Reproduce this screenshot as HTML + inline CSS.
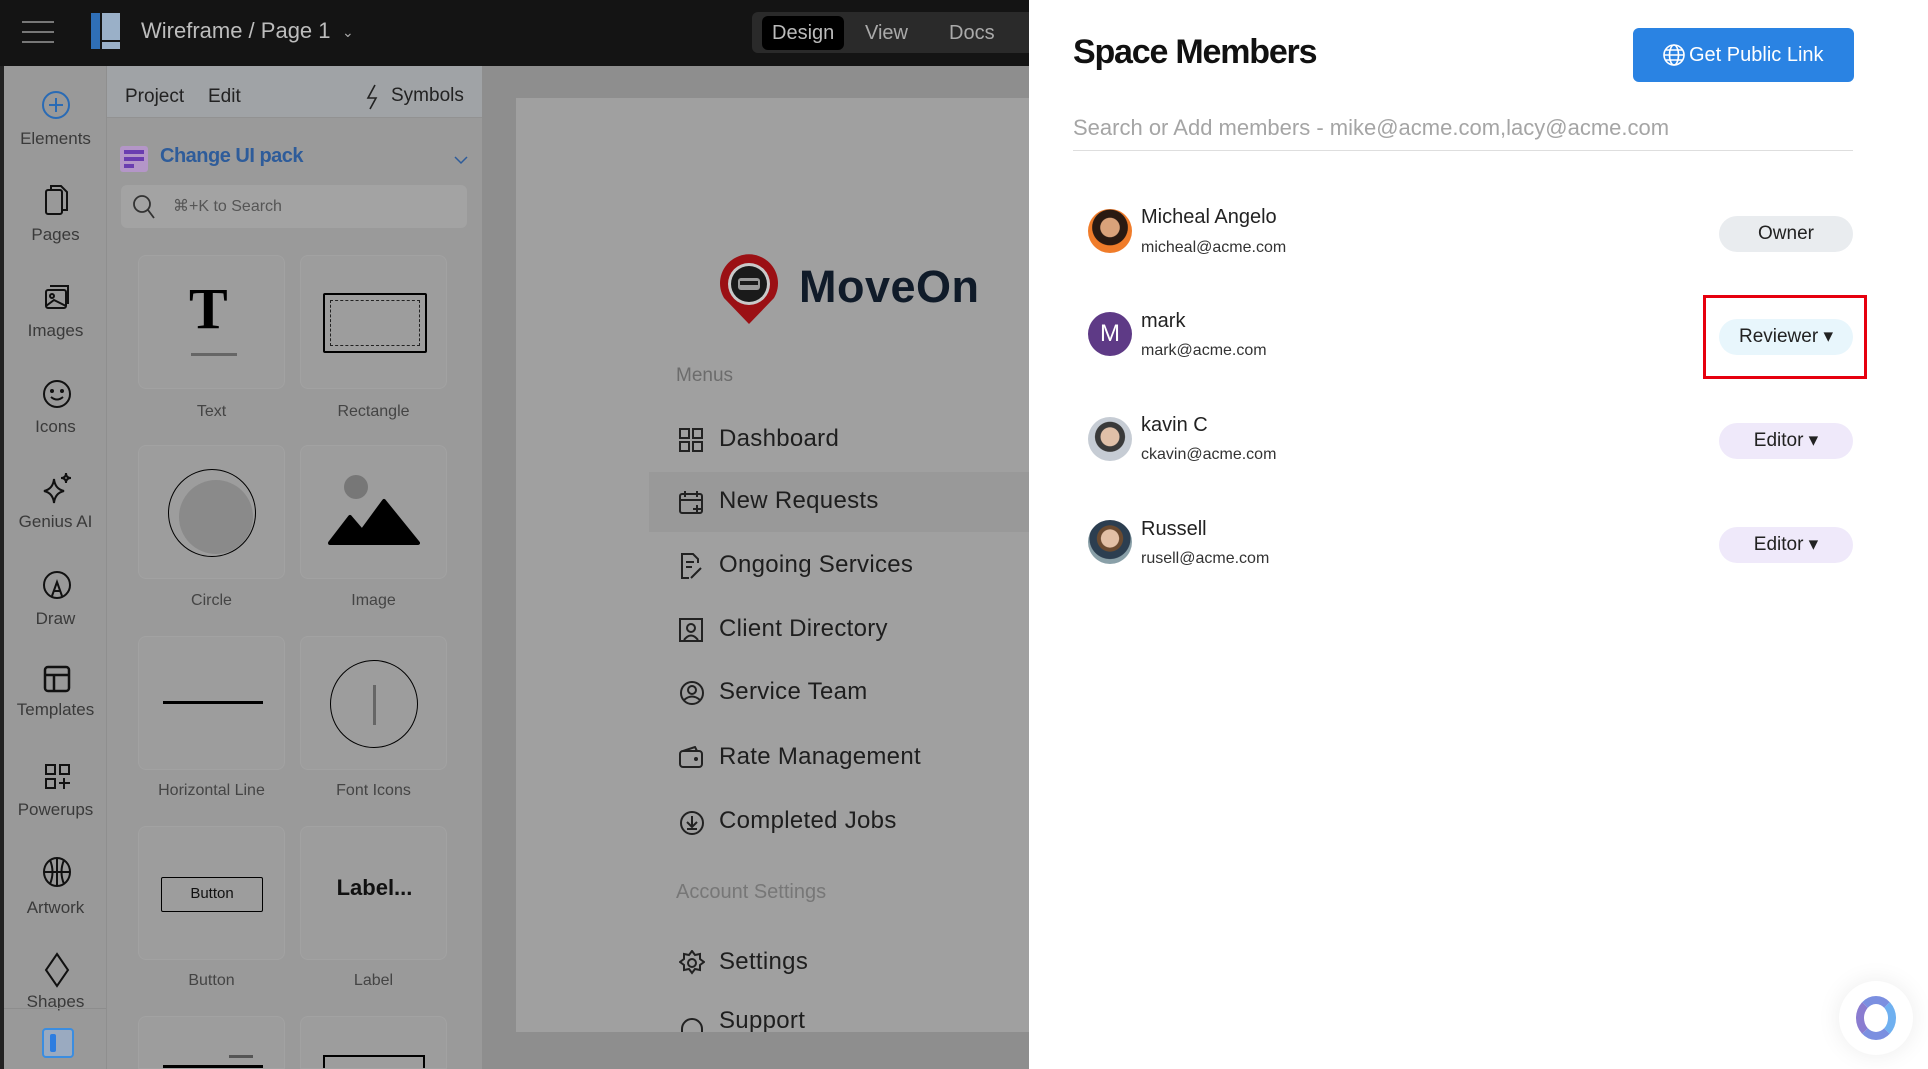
<!DOCTYPE html>
<html style="overflow:hidden;height:1069px"><head><meta charset="utf-8"><style>
*{margin:0;padding:0;box-sizing:border-box}
html,body{width:1928px;height:1069px;overflow:hidden}
body{position:relative;background:#fff;font-family:"Liberation Sans",sans-serif}
.a{position:absolute}
.top{left:0;top:0;width:1029px;height:66px;background:#141414}
.side{left:0;top:66px;width:107px;height:1003px;background:#999;border-left:4px solid #222;border-right:1px solid #8f8f8f;overflow:hidden}
.sl{position:absolute;width:103px;left:0;text-align:center;font-size:17px;color:#3a3a3a}
.panel{left:107px;top:66px;width:375px;height:1003px;background:#9a9a9a;overflow:hidden}
.tile{position:absolute;width:147px;height:134px;background:#9d9d9d;border:1px solid #a2a2a2;border-radius:8px;overflow:hidden}
.tl{position:absolute;width:147px;text-align:center;font-size:16px;color:#444}
.canvas{left:482px;top:66px;width:547px;height:1003px;background:#8e8e8e}
.art{left:516px;top:98px;width:513px;height:934px;background:#a0a0a0;overflow:hidden}
.mi{position:absolute;left:203px;font-size:24px;color:#1e1e1e;letter-spacing:.3px}
.ic{position:absolute;left:163px}
.name{position:absolute;left:1141px;font-size:20px;color:#222}
.mail{position:absolute;left:1141px;font-size:16px;color:#333}
.badge{position:absolute;left:1719px;width:134px;height:36px;border-radius:18px;font-size:19px;color:#222;text-align:center;line-height:36px}
.av{position:absolute;left:1088px;width:44px;height:44px;border-radius:50%}
</style></head><body>
<div class="a top"></div>
<svg class="a" style="left:22px;top:20px" width="34" height="24"><g stroke="#777" stroke-width="2"><line x1="0" y1="2" x2="32" y2="2"/><line x1="0" y1="12" x2="32" y2="12"/><line x1="0" y1="22" x2="32" y2="22"/></g></svg>
<svg class="a" style="left:91px;top:13px" width="32" height="36"><rect x="0" y="0" width="9" height="36" fill="#2f6fb7"/><rect x="11" y="0" width="18" height="27" fill="#9ab0c8"/><rect x="11" y="29" width="18" height="7" fill="#9ab0c8"/></svg>
<div class="a" style="left:141px;top:18px;font-size:22px;color:#bdbdbd">Wireframe / Page 1</div>
<div class="a" style="left:342px;top:24px;font-size:14px;color:#aaa">⌄</div>
<div class="a" style="left:752px;top:12px;width:277px;height:41px;background:#2a2a2a;border-radius:6px 0 0 6px"></div>
<div class="a" style="left:762px;top:16px;width:82px;height:34px;background:#000;border-radius:6px"></div>
<div class="a" style="left:772px;top:22px;font-size:20px;color:#bbb">Design</div>
<div class="a" style="left:865px;top:22px;font-size:20px;color:#aaa">View</div>
<div class="a" style="left:949px;top:22px;font-size:20px;color:#aaa">Docs</div>

<div class="a side">
<svg class="a" style="left:37px;top:24px" width="30" height="30"><circle cx="15" cy="15" r="13" fill="none" stroke="#2a6bb5" stroke-width="2"/><path d="M15 8v14M8 15h14" stroke="#2a6bb5" stroke-width="2"/></svg>
<div class="sl" style="top:63px">Elements</div>
<svg class="a" style="left:40px;top:118px" width="26" height="32" fill="none" stroke="#111" stroke-width="2"><rect x="2" y="6" width="16" height="24" rx="2"/><path d="M7 6V2h10l6 6v18h-5"/></svg>
<div class="sl" style="top:159px">Pages</div>
<svg class="a" style="left:40px;top:218px" width="28" height="28" fill="none" stroke="#111" stroke-width="2"><rect x="2" y="6" width="20" height="18" rx="2"/><path d="M6 2h18v18"/><circle cx="8" cy="12" r="2"/><path d="M2 22l8-6 12 6"/></svg>
<div class="sl" style="top:255px">Images</div>
<svg class="a" style="left:38px;top:313px" width="30" height="30" fill="none" stroke="#111" stroke-width="2"><circle cx="15" cy="15" r="13"/><circle cx="10" cy="12" r="1" fill="#111"/><circle cx="20" cy="12" r="1" fill="#111"/><path d="M9 18q6 5 12 0"/></svg>
<div class="sl" style="top:351px">Icons</div>
<svg class="a" style="left:36px;top:405px" width="34" height="34" fill="none" stroke="#111" stroke-width="2"><path d="M14 8q1 10 10 12q-9 2-10 12q-1-10-10-12q9-2 10-12z"/><path d="M26 2q0 5 5 5q-5 0-5 5q0-5-5-5q5 0 5-5z"/></svg>
<div class="sl" style="top:446px">Genius AI</div>
<svg class="a" style="left:38px;top:504px" width="30" height="30" fill="none" stroke="#111" stroke-width="2"><circle cx="15" cy="15" r="13"/><path d="M10 26l5-14 5 14M11 21h8"/></svg>
<div class="sl" style="top:543px">Draw</div>
<svg class="a" style="left:39px;top:599px" width="28" height="28" fill="none" stroke="#111" stroke-width="2.5"><rect x="2" y="2" width="24" height="24" rx="3"/><path d="M2 10h24M11 10v16"/></svg>
<div class="sl" style="top:634px">Templates</div>
<svg class="a" style="left:40px;top:697px" width="28" height="28" fill="none" stroke="#111" stroke-width="2"><rect x="2" y="2" width="9" height="9"/><rect x="16" y="2" width="9" height="9"/><rect x="2" y="16" width="9" height="9"/><path d="M20 15v11M15 20h11"/></svg>
<div class="sl" style="top:734px">Powerups</div>
<svg class="a" style="left:38px;top:790px" width="30" height="32" fill="none" stroke="#111" stroke-width="2"><ellipse cx="15" cy="16" rx="13" ry="14"/><path d="M15 2v28M2 16h26M8 4q5 12 0 24M22 4q-5 12 0 24"/></svg>
<div class="sl" style="top:832px">Artwork</div>
<svg class="a" style="left:40px;top:886px" width="26" height="36" fill="none" stroke="#111" stroke-width="2"><path d="M13 2L24 18 13 34 2 18z"/></svg>
<div class="sl" style="top:926px">Shapes</div>
<div class="a" style="left:0;top:942px;width:103px;height:1px;background:#8d8d8d"></div>
<div class="a" style="left:38px;top:962px;width:32px;height:30px;border:2px solid #3b8de0;border-radius:4px;background:#9aaac0"><div style="margin:4px 0 0 6px;width:6px;height:18px;background:#2d7de0;border-radius:2px"></div></div>
</div>

<div class="a panel">
<div class="a" style="left:0;top:0;width:375px;height:52px;background:#a0a3a6;border-bottom:1px solid #929292"></div>
<div class="a" style="left:18px;top:20px;font-size:19px;color:#222">Project</div>
<div class="a" style="left:101px;top:20px;font-size:19px;color:#222">Edit</div>
<svg class="a" style="left:258px;top:18px" width="16" height="26" fill="none" stroke="#222" stroke-width="1.6"><path d="M10 1L3 14h8L5 25"/></svg>
<div class="a" style="left:284px;top:19px;font-size:19px;color:#222">Symbols</div>
<svg class="a" style="left:13px;top:80px" width="28" height="26"><rect x="0" y="0" width="28" height="26" rx="3" fill="#b496c8"/><rect x="4" y="4" width="20" height="4" fill="#6a3db0"/><rect x="4" y="11" width="20" height="4" fill="#6a3db0"/><rect x="4" y="18" width="10" height="4" fill="#6a3db0"/></svg>
<div class="a" style="left:53px;top:79px;font-size:20px;font-weight:bold;color:#2e5c9a;letter-spacing:-.5px">Change UI pack</div>
<svg class="a" style="left:347px;top:90px" width="14" height="10" fill="none" stroke="#2e5c9a" stroke-width="1.5"><path d="M1 1l6 6 6-6"/></svg>
<div class="a" style="left:14px;top:119px;width:346px;height:43px;background:#a3a3a3;border-radius:6px"></div>
<svg class="a" style="left:25px;top:128px" width="24" height="26" fill="none" stroke="#333" stroke-width="1.8"><circle cx="10" cy="10" r="8"/><path d="M16 16l6 8"/></svg>
<div class="a" style="left:66px;top:130px;font-size:16px;color:#555">⌘+K to Search</div>

<div class="tile" style="left:31px;top:189px"><div style="position:absolute;left:50px;top:28px;font-family:'Liberation Serif',serif;font-weight:bold;font-size:58px;line-height:50px;color:#000">T</div><div style="position:absolute;left:52px;top:97px;width:46px;height:3px;background:#666"></div></div>
<div class="tile" style="left:193px;top:189px"><div style="position:absolute;left:22px;top:37px;width:104px;height:60px;border:2px solid #000;border-radius:2px"><div style="margin:5px;height:46px;border:1.5px dashed #222"></div></div></div>
<div class="tl" style="left:31px;top:337px">Text</div>
<div class="tl" style="left:193px;top:337px">Rectangle</div>
<div class="tile" style="left:31px;top:379px"><div style="position:absolute;left:29px;top:23px;width:88px;height:88px;border:1.5px solid #000;border-radius:50%;overflow:hidden"><div style="margin:10px 0 0 10px;width:74px;height:74px;border-radius:50%;background:#8a8a8a"></div></div></div>
<div class="tile" style="left:193px;top:379px"><svg style="position:absolute;left:27px;top:27px" width="92" height="80"><circle cx="28" cy="14" r="12" fill="#777"/><path d="M2 70L22 44 34 58 56 28 90 70z" fill="#000" stroke="#000" stroke-width="4" stroke-linejoin="round"/></svg></div>
<div class="tl" style="left:31px;top:526px">Circle</div>
<div class="tl" style="left:193px;top:526px">Image</div>
<div class="tile" style="left:31px;top:570px"><div style="position:absolute;left:24px;top:64px;width:100px;height:3px;background:#000"></div></div>
<div class="tile" style="left:193px;top:570px"><div style="position:absolute;left:29px;top:23px;width:88px;height:88px;border:1.5px solid #000;border-radius:50%"><div style="position:absolute;left:42px;top:24px;width:3px;height:40px;background:#666"></div></div></div>
<div class="tl" style="left:31px;top:716px">Horizontal Line</div>
<div class="tl" style="left:193px;top:716px">Font Icons</div>
<div class="tile" style="left:31px;top:760px"><div style="position:absolute;left:22px;top:50px;width:102px;height:35px;border:1.5px solid #000;border-radius:2px;font-size:15px;text-align:center;line-height:32px;color:#111">Button</div></div>
<div class="tile" style="left:193px;top:760px"><div style="position:absolute;width:147px;top:48px;text-align:center;font-size:22px;font-weight:bold;color:#111">Label...</div></div>
<div class="tl" style="left:31px;top:906px">Button</div>
<div class="tl" style="left:193px;top:906px">Label</div>
<div class="tile" style="left:31px;top:950px;height:53px;border-radius:8px 8px 0 0"><div style="position:absolute;left:24px;top:48px;width:100px;height:3px;background:#000"></div><div style="position:absolute;left:90px;top:38px;width:24px;height:3px;background:#555"></div></div>
<div class="tile" style="left:193px;top:950px;height:53px;border-radius:8px 8px 0 0"><div style="position:absolute;left:22px;top:38px;width:102px;height:15px;border:2px solid #000;border-bottom:none"></div></div>
</div>
<div class="a" style="left:491px;top:560px;width:4px;height:4px;border-radius:50%;background:#111;box-shadow:0 7px 0 #111,0 14px 0 #111"></div>

<div class="a canvas"></div>
<div class="a art">
<svg class="a" style="left:202px;top:156px" width="62" height="72"><path d="M31 70L6 44A29 29 0 1 1 56 44z" fill="#9b1014"/><circle cx="31" cy="30" r="21" fill="#c9c9c9"/><circle cx="31" cy="30" r="18" fill="#1a1a1a"/><rect x="20" y="24" width="22" height="12" rx="3" fill="#9a9a9a"/><rect x="22" y="27" width="18" height="4" fill="#1a1a1a"/></svg>
<div class="a" style="left:283px;top:163px;font-size:45px;font-weight:bold;color:#101b29;letter-spacing:.5px">MoveOn</div>
<div class="a" style="left:160px;top:267px;font-size:19px;color:#6c6c6c">Menus</div>
<div class="a" style="left:133px;top:374px;width:380px;height:60px;background:#999"></div>
<svg class="ic" style="top:330px" width="24" height="24" fill="none" stroke="#222" stroke-width="2"><rect x="1" y="1" width="9" height="9"/><rect x="14" y="1" width="9" height="9"/><rect x="1" y="14" width="9" height="9"/><rect x="14" y="14" width="9" height="9"/></svg>
<div class="mi" style="top:327px">Dashboard</div>
<svg class="ic" style="top:392px" width="24" height="24" fill="none" stroke="#222" stroke-width="2"><rect x="1" y="4" width="22" height="19" rx="2"/><path d="M1 10h22M6 1v6M18 1v6M18 15v8M14 19h8"/></svg>
<div class="mi" style="top:389px">New Requests</div>
<svg class="ic" style="top:455px" width="24" height="26" fill="none" stroke="#222" stroke-width="2"><path d="M19 10V6l-5-5H3v24h7"/><path d="M7 9h8M7 14h6M12 25l10-10"/></svg>
<div class="mi" style="top:453px">Ongoing Services</div>
<svg class="ic" style="top:520px" width="24" height="24" fill="none" stroke="#222" stroke-width="2"><rect x="1" y="1" width="22" height="22"/><circle cx="12" cy="10" r="4"/><path d="M5 22q7-9 14 0"/></svg>
<div class="mi" style="top:517px">Client Directory</div>
<svg class="ic" style="top:583px" width="26" height="24" fill="none" stroke="#222" stroke-width="2"><circle cx="13" cy="12" r="11"/><circle cx="13" cy="9" r="4"/><path d="M5 19q8-7 16 0"/></svg>
<div class="mi" style="top:580px">Service Team</div>
<svg class="ic" style="top:648px" width="24" height="22" fill="none" stroke="#222" stroke-width="2"><rect x="1" y="5" width="22" height="16" rx="3"/><path d="M4 5l12-4 2 4"/><circle cx="17" cy="13" r="1" fill="#222"/></svg>
<div class="mi" style="top:645px">Rate Management</div>
<svg class="ic" style="top:712px" width="26" height="26" fill="none" stroke="#222" stroke-width="2"><circle cx="13" cy="13" r="11"/><path d="M13 6v10M8 12l5 5 5-5M8 19h10"/></svg>
<div class="mi" style="top:709px">Completed Jobs</div>
<div class="a" style="left:160px;top:783px;font-size:20px;color:#777">Account Settings</div>
<svg class="ic" style="top:852px" width="26" height="26" fill="none" stroke="#222" stroke-width="2"><circle cx="13" cy="13" r="4"/><path d="M13 1l3 4 5-1 0 5 4 3-4 3 0 5-5-1-3 4-3-4-5 1 0-5-4-3 4-3 0-5 5 1z"/></svg>
<div class="mi" style="top:850px">Settings</div>
<svg class="ic" style="top:918px" width="26" height="16" fill="none" stroke="#222" stroke-width="2"><path d="M3 16v-3a10 10 0 0 1 20 0v3"/></svg>
<div class="mi" style="top:906px;height:28px;overflow:hidden;line-height:34px">Support</div>
</div>

<div class="a" style="left:1073px;top:33px;font-size:34px;font-weight:bold;color:#111;letter-spacing:-1.2px">Space Members</div>
<div class="a" style="left:1633px;top:28px;width:221px;height:54px;background:#2a83e3;border-radius:6px;color:#fff;font-size:20px;line-height:54px;padding-left:56px">Get Public Link</div>
<svg class="a" style="left:1663px;top:44px" width="22" height="22" fill="none" stroke="#fff" stroke-width="1.6"><circle cx="11" cy="11" r="10"/><ellipse cx="11" cy="11" rx="4.5" ry="10"/><path d="M1 11h20M3 6h16M3 16h16"/></svg>
<div class="a" style="left:1073px;top:115px;font-size:22px;color:#a5a5a5">Search or Add members - mike@acme.com,lacy@acme.com</div>
<div class="a" style="left:1073px;top:150px;width:780px;height:1px;background:#dedede"></div>

<div class="av" style="top:209px;background:radial-gradient(circle at 50% 42%,#d9a27a 0 28%,#2a1a12 30% 52%,#f07c2a 54%)"></div>
<div class="name" style="top:206px">Micheal Angelo</div>
<div class="mail" style="top:239px">micheal@acme.com</div>
<div class="badge" style="top:216px;background:#e9ecef">Owner</div>

<div class="av" style="top:312px;background:#5e3a86;color:#fff;font-size:24px;text-align:center;line-height:44px">M</div>
<div class="name" style="top:310px">mark</div>
<div class="mail" style="top:342px">mark@acme.com</div>
<div class="badge" style="top:319px;background:#e8f6fc">Reviewer ▾</div>
<div class="a" style="left:1703px;top:295px;width:164px;height:84px;border:3px solid #e6000e"></div>

<div class="av" style="top:417px;background:radial-gradient(circle at 50% 45%,#e0c0a8 0 28%,#3a3a3a 30% 45%,#c6ccd4 47%)"></div>
<div class="name" style="top:414px">kavin C</div>
<div class="mail" style="top:446px">ckavin@acme.com</div>
<div class="badge" style="top:423px;background:#efe9fa">Editor ▾</div>

<div class="av" style="top:520px;background:radial-gradient(circle at 50% 42%,#e2c0a6 0 26%,#6a4a30 28% 38%,#2c3e50 40% 60%,#8aa0a8 62%)"></div>
<div class="name" style="top:518px">Russell</div>
<div class="mail" style="top:550px">rusell@acme.com</div>
<div class="badge" style="top:527px;background:#efe9fa">Editor ▾</div>

<div class="a" style="left:1839px;top:981px;width:74px;height:74px;border-radius:50%;background:#fff;box-shadow:0 0 24px rgba(0,0,0,.08)"></div>
<div class="a" style="left:1856px;top:996px;width:40px;height:44px;border-radius:50%;border:8px solid #7b8fe0;border-left-color:#8a7cd0;border-right-color:#6fb0f0"></div>
</body></html>
